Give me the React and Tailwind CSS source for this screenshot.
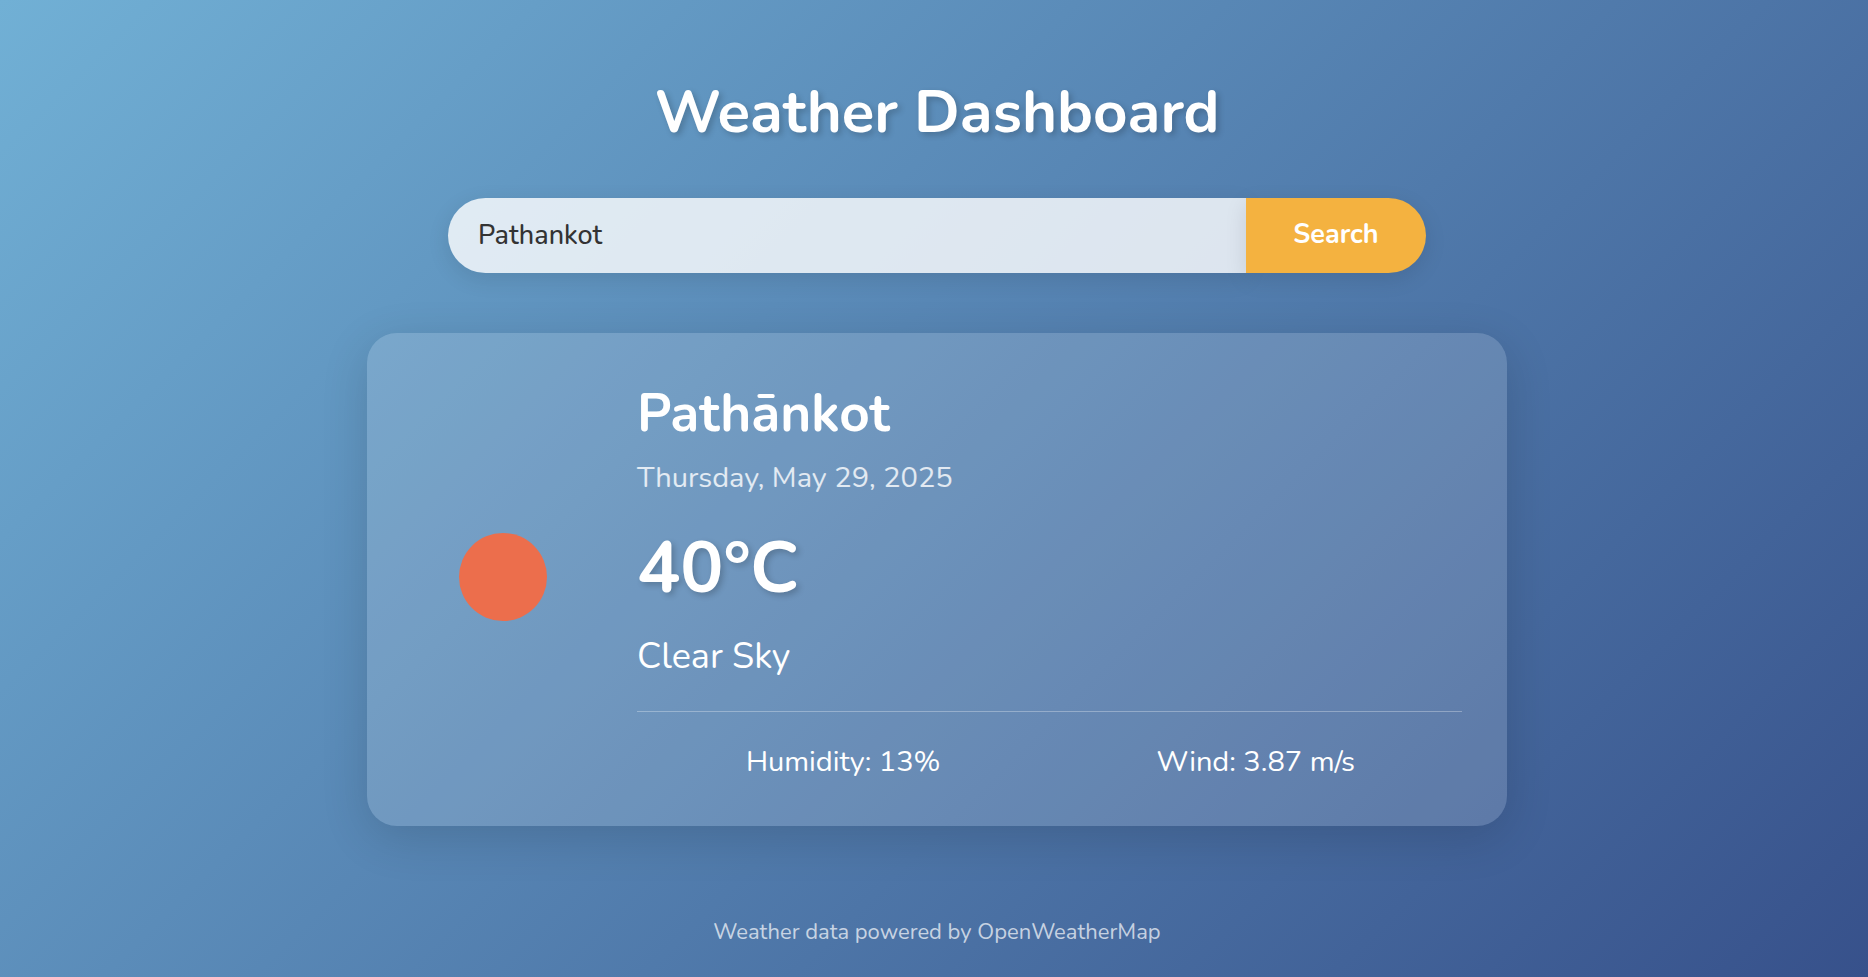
import React, { useState } from "react";

function SearchForm() {
  const [city, setCity] = useState("Pathankot");
  return (
    <form
      className="flex w-full max-w-[978px]"
      onSubmit={(event) => event.preventDefault()}
    >
      <input
        type="text"
        aria-label="City"
        value={city}
        onChange={(event) => setCity(event.target.value)}
        className="h-[75px] min-w-0 flex-1 rounded-l-full bg-white/80 px-[30px] text-[27px] font-medium text-[#333] shadow-[0_6px_22px_rgba(0,0,0,0.1)] outline-none"
      />
      <button
        type="submit"
        className="h-[75px] w-[180px] cursor-pointer rounded-r-full bg-[#f4b240] text-[27px] font-bold text-white shadow-[0_6px_22px_rgba(0,0,0,0.1)]"
      >
        Search
      </button>
    </form>
  );
}

function WeatherCard() {
  return (
    <section className="flex w-full max-w-[1140px] items-center gap-[45px] rounded-[30px] bg-white/15 p-[45px] shadow-[0_12px_48px_rgba(0,0,0,0.14)]">
      <svg viewBox="0 0 180 180" role="img" aria-label="Clear sky" className="size-[180px] shrink-0">
        <circle cx="91" cy="87" r="44" fill="#ec6e4c" />
      </svg>
      <div className="min-w-0 flex-1">
        <h2 className="text-[53px] leading-[72px] font-bold">Pathānkot</h2>
        <p className="mt-2 text-[29px] leading-[39px] text-white/80">Thursday, May 29, 2025</p>
        <p className="mt-[22px] text-[72px] leading-[98px] font-bold [text-shadow:3px_3px_6px_rgba(0,0,0,0.2)]">
          40°C
        </p>
        <p className="mt-[15px] text-[36px] leading-[49px]">Clear Sky</p>
        <div className="mt-[30px] grid grid-cols-2 border-t border-white/30 pt-[30px] text-center text-[29px] leading-[39px]">
          <p>Humidity: 13%</p>
          <p>Wind: 3.87 m/s</p>
        </div>
      </div>
    </section>
  );
}

export default function App() {
  return (
    <div className="min-h-screen bg-linear-[135deg,#71b0d5,#37518b] pl-1.5 font-['Nunito','Noto_Sans',sans-serif] text-white">
      <main className="flex flex-col items-center pt-[72px]">
        <h1 className="mb-[45px] text-center text-[60px] leading-[81px] font-bold [text-shadow:3px_3px_6px_rgba(0,0,0,0.2)]">
          Weather Dashboard
        </h1>
        <SearchForm />
        <div className="mt-[60px] flex w-full justify-center">
          <WeatherCard />
        </div>
      </main>
      <footer className="mt-[91px] pb-[30px] text-center text-[22px] leading-[30px] text-white/70">
        Weather data powered by OpenWeatherMap
      </footer>
    </div>
  );
}
